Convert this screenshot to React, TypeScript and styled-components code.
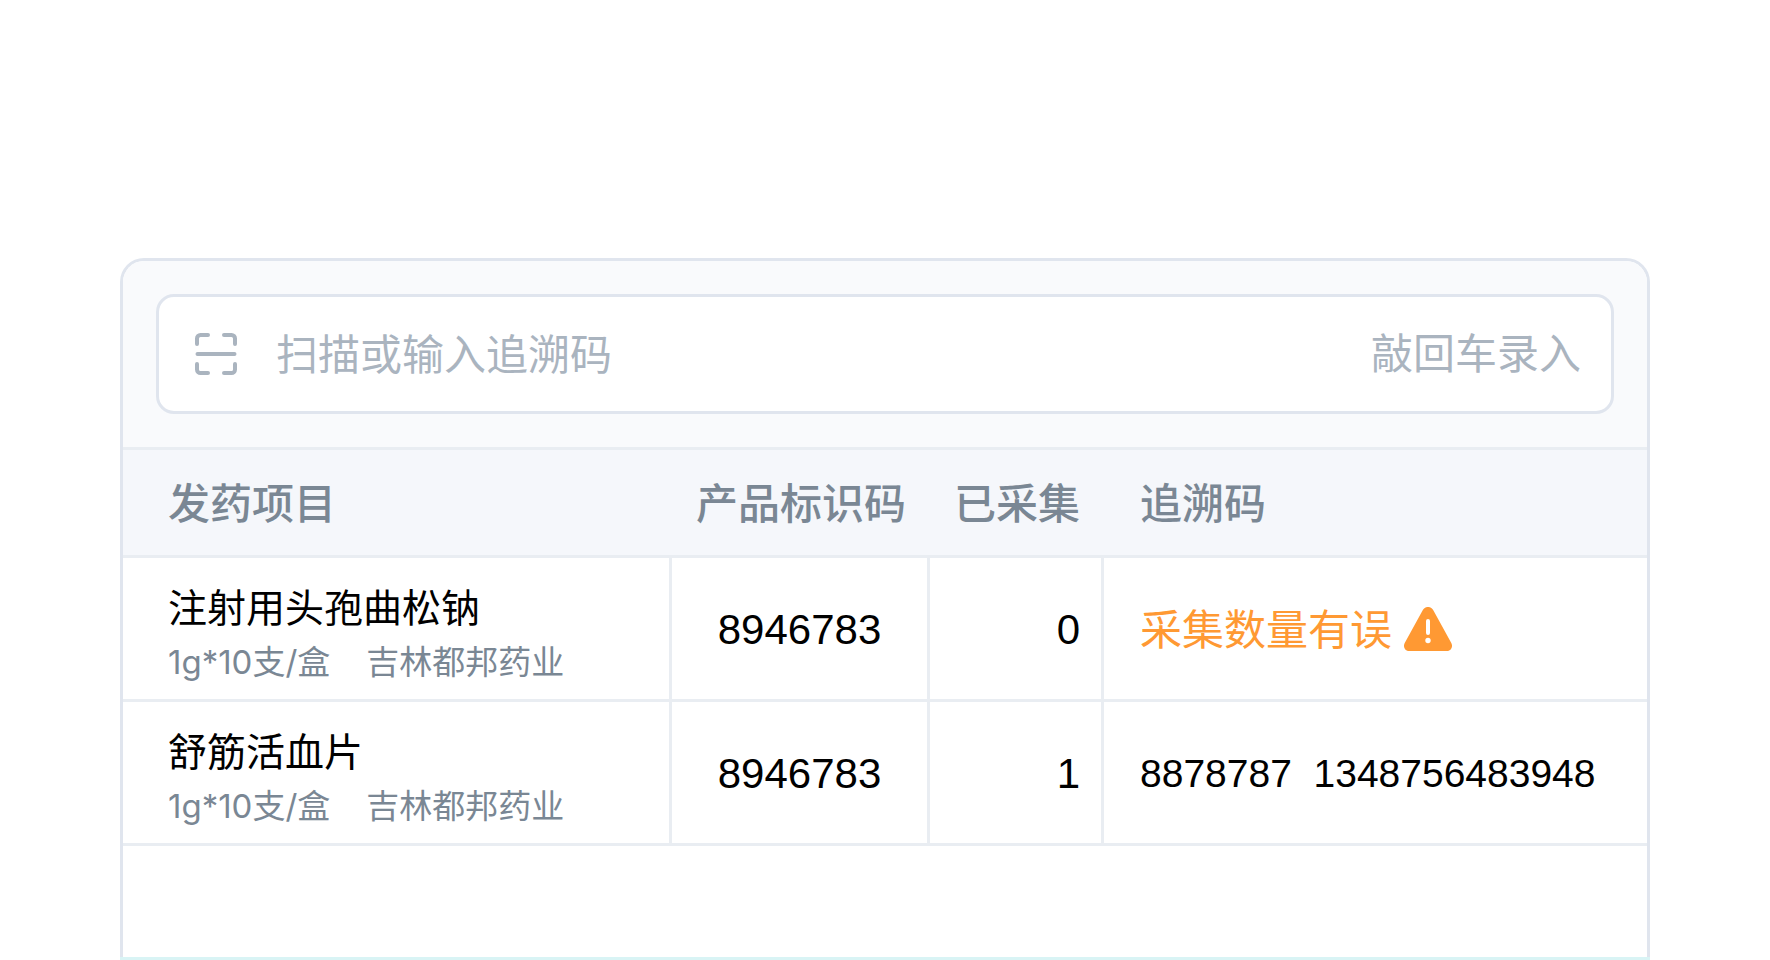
import React from "react";
import styled, { createGlobalStyle } from "styled-components";

const cjk = `"Noto Sans CJK SC", sans-serif`;

const GlobalStyle = createGlobalStyle`
  *, *::before, *::after { box-sizing: border-box; }
  body {
    margin: 0;
    background: #ffffff;
    color: #000000;
    font-family: Inter, ${cjk};
  }
`;

const Page = styled.main`
  display: flex;
  flex-direction: column;
  min-height: 100vh;
  padding: 258px 120px 0;
`;

const Frame = styled.section`
  display: flex;
  flex: 1;
  flex-direction: column;
  border-bottom: 3px solid #d9f4f5;
`;

const Panel = styled.div`
  flex: 1;
  overflow: hidden;
  border: 3px solid #e0e5ee;
  border-bottom: 0;
  border-radius: 24px 24px 0 0;
`;

const SearchBar = styled.form`
  padding: 33px;
  background: #f9fafc;
`;

const SearchField = styled.label`
  display: flex;
  align-items: center;
  height: 120px;
  padding: 0 30px 0 36px;
  border: 3px solid #e0e5ee;
  border-radius: 18px;
  background: #ffffff;
  color: #aab4bf;
`;

const SearchInput = styled.input`
  flex: 1;
  min-width: 0;
  height: 66px;
  margin-left: 39px;
  padding: 0 0 6px;
  border: 0;
  outline: 0;
  background: transparent;
  color: #000000;
  font: 400 42px/60px ${cjk};

  &::placeholder {
    color: #aab4bf;
    opacity: 1;
  }
`;

const EnterHint = styled.span`
  padding-bottom: 6px;
  font: 400 42px/60px ${cjk};
  white-space: nowrap;
`;

const Table = styled.table`
  width: 100%;
  table-layout: fixed;
  border-collapse: separate;
  border-spacing: 0;
`;

const Column = styled.col<{ $width?: number }>`
  width: ${(p) => (p.$width ? `${p.$width}px` : "auto")};
`;

type Align = "left" | "center" | "right";

const HeadCell = styled.th<{ $align?: Align; $indent?: number }>`
  height: 111px;
  padding: 0 24px 3px ${(p) => p.$indent ?? 0}px;
  border-top: 3px solid #e9edf2;
  border-bottom: 3px solid #e9edf2;
  background: #f5f7fb;
  color: #7a8794;
  font: 500 42px/60px ${cjk};
  text-align: ${(p) => p.$align ?? "left"};
  white-space: nowrap;
`;

const Cell = styled.td<{ $align?: Align; $indent?: number; $end?: number }>`
  height: 144px;
  padding: 0 ${(p) => p.$end ?? 0}px 0 ${(p) => p.$indent ?? 0}px;
  border-right: 3px solid #e9edf2;
  border-bottom: 3px solid #e9edf2;
  text-align: ${(p) => p.$align ?? "left"};
  vertical-align: middle;
  white-space: nowrap;

  &:last-child {
    border-right: 0;
  }
`;

const DrugName = styled.div`
  padding-top: 6px;
  font: 400 39px/60px ${cjk};
`;

const DrugMeta = styled.div`
  display: flex;
  gap: 36px;
  color: #7a8794;
  font: 400 33px/54px Inter, ${cjk};
`;

const Figure = styled.div<{ $small?: boolean }>`
  padding-top: 3px;
  font: 400 ${(p) => (p.$small ? 39 : 42)}px/60px "Liberation Sans", ${cjk};
  white-space: pre;
`;

const Warning = styled.div`
  display: flex;
  align-items: center;
  gap: 12px;
  color: #ff9933;
  font: 400 42px/60px ${cjk};
`;

const WarningText = styled.span`
  padding-bottom: 3px;
`;

const ScanIcon = () => (
  <svg width="42" height="42" viewBox="0 0 42 42" fill="none" stroke="currentColor" strokeWidth="4" strokeLinecap="round" strokeLinejoin="round" aria-hidden="true">
    <path d="M2 11V5.5A3.5 3.5 0 0 1 5.500 2H13M29 2h7.500A3.500 3.500 0 0 1 40 5.500V11M40 31v5.500a3.500 3.500 0 0 1-3.500 3.500H29M13 40H5.500A3.500 3.500 0 0 1 2 36.500V31M2.500 21h37" />
  </svg>
);

const WarningIcon = () => (
  <svg width="48" height="44" viewBox="0 0 48 44" aria-hidden="true">
    <path d="M18.700 3.200C20.900-1.100 27.100-1.100 29.300 3.200L47.300 36C49.300 39.800 46.900 44 42.700 44H5.300C1.100 44-1.300 39.800.700 36Z" fill="#ff9933" />
    <path d="M24 14v12" stroke="#fff" strokeWidth="4" strokeLinecap="round" />
    <circle cx="24" cy="33.500" r="2.700" fill="#fff" />
  </svg>
);

interface Item {
  name: string;
  spec: string;
  maker: string;
  productCode: string;
  collected: number;
  codes?: string[];
  error?: string;
}

const items: Item[] = [
  {
    name: "注射用头孢曲松钠",
    spec: "1g*10支/盒",
    maker: "吉林都邦药业",
    productCode: "8946783",
    collected: 0,
    error: "采集数量有误",
  },
  {
    name: "舒筋活血片",
    spec: "1g*10支/盒",
    maker: "吉林都邦药业",
    productCode: "8946783",
    collected: 1,
    codes: ["8878787", "1348756483948"],
  },
];

export default function App() {
  return (
    <>
      <GlobalStyle />
      <Page>
        <Frame>
          <Panel>
            <SearchBar onSubmit={(e) => e.preventDefault()}>
              <SearchField>
                <ScanIcon />
                <SearchInput type="text" placeholder="扫描或输入追溯码" aria-label="扫描或输入追溯码" />
                <EnterHint>敲回车录入</EnterHint>
              </SearchField>
            </SearchBar>
            <Table>
              <colgroup>
                <Column />
                <Column $width={258} />
                <Column $width={174} />
                <Column $width={543} />
              </colgroup>
              <thead>
                <tr>
                  <HeadCell scope="col" $indent={45}>发药项目</HeadCell>
                  <HeadCell scope="col" $align="right">产品标识码</HeadCell>
                  <HeadCell scope="col" $align="right">已采集</HeadCell>
                  <HeadCell scope="col" $indent={36}>追溯码</HeadCell>
                </tr>
              </thead>
              <tbody>
                {items.map((item) => (
                  <tr key={item.name}>
                    <Cell $indent={45}>
                      <DrugName>{item.name}</DrugName>
                      <DrugMeta>
                        <span>{item.spec}</span>
                        <span>{item.maker}</span>
                      </DrugMeta>
                    </Cell>
                    <Cell $align="center">
                      <Figure>{item.productCode}</Figure>
                    </Cell>
                    <Cell $align="right" $end={21}>
                      <Figure>{item.collected}</Figure>
                    </Cell>
                    <Cell $indent={36}>
                      {item.error ? (
                        <Warning>
                          <WarningText>{item.error}</WarningText>
                          <WarningIcon />
                        </Warning>
                      ) : (
                        <Figure $small>{item.codes?.join("  ")}</Figure>
                      )}
                    </Cell>
                  </tr>
                ))}
              </tbody>
            </Table>
          </Panel>
        </Frame>
      </Page>
    </>
  );
}
